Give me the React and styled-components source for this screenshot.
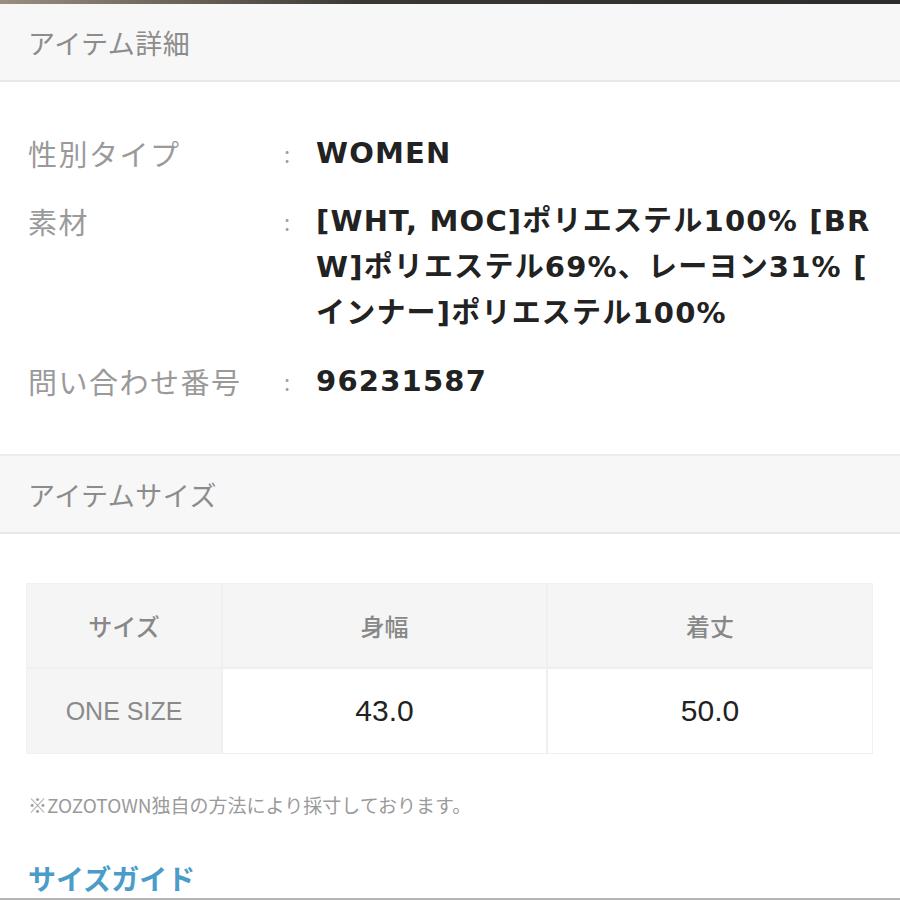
import React from "react";
import styled, { createGlobalStyle } from "styled-components";

const GlobalStyle = createGlobalStyle`
	html, body {
		margin: 0;
		padding: 0;
		background: #ffffff;
	}
	body {
		font-family: "Noto Sans CJK JP", "Noto Sans", sans-serif;
	}
`;

//data
const details = [
	{ label: "性別タイプ", lines: ["WOMEN"] },
	{
		label: "素材",
		lines: [
			"[WHT, MOC]ポリエステル100% [BR",
			"W]ポリエステル69%、レーヨン31% [",
			"インナー]ポリエステル100%",
		],
	},
	{ label: "問い合わせ番号", lines: ["96231587"] },
];

const sizeHead = ["サイズ", "身幅", "着丈"];
const sizeRows = [{ name: "ONE SIZE", values: ["43.0", "50.0"] }];

function App() {
	return (
		<>
			<GlobalStyle />
			<Page>
				<PhotoEdge />
				<SectionHeader>アイテム詳細</SectionHeader>
				<DetailList>
					{details.map((item) => (
						<DetailRow key={item.label}>
							<Label>{item.label}</Label>
							<Colon>:</Colon>
							<Value>
								{item.lines.map((line) => (
									<span key={line}>{line}</span>
								))}
							</Value>
						</DetailRow>
					))}
				</DetailList>
				<SectionHeader $top>アイテムサイズ</SectionHeader>
				<SizeArea>
					<SizeTable>
						{sizeHead.map((head) => (
							<HeadCell key={head}>{head}</HeadCell>
						))}
						{sizeRows.map((row) => (
							<React.Fragment key={row.name}>
								<NameCell>{row.name}</NameCell>
								{row.values.map((v, i) => (
									<ValueCell key={i}>{v}</ValueCell>
								))}
							</React.Fragment>
						))}
					</SizeTable>
					<Note>※ZOZOTOWN独自の方法により採寸しております。</Note>
					<GuideLink href="#">サイズガイド</GuideLink>
				</SizeArea>
			</Page>
		</>
	);
}

const Page = styled.div`
	width: 900px;
	height: 900px;
	overflow: hidden;
	background: #fff;
	border-bottom: 2px solid #b5b5b5;
	box-sizing: border-box;
`;

const PhotoEdge = styled.div`
	height: 4px;
	background: linear-gradient(90deg, #9a8f80 0%, #3a3733 40%, #2e2c2a 100%);
`;

const SectionHeader = styled.div`
	height: 76px;
	display: flex;
	align-items: center;
	padding: 0 28px;
	background: #f7f7f7;
	border-bottom: 2px solid #e8e8e8;
	border-top: ${(p) => (p.$top ? "2px solid #ececec" : "none")};
	color: #8c8c8c;
	font-size: 27px;
	letter-spacing: 0.5px;
`;

const DetailList = styled.div`
	display: flex;
	flex-direction: column;
	gap: 22px;
	padding: 48px 0 50px 28px;
`;

const DetailRow = styled.div`
	display: grid;
	grid-template-columns: 256px 32px 1fr;
	line-height: 46px;
`;

const Label = styled.div`
	color: #9a9a9a;
	font-size: 29px;
	letter-spacing: 1.5px;
	white-space: nowrap;
`;

const Colon = styled.div`
	color: #a0a0a0;
	font-size: 22px;
`;

const Value = styled.div`
	display: flex;
	flex-direction: column;
	color: #222;
	font-family: "DejaVu Sans", "Noto Sans CJK JP", sans-serif;
	font-weight: 700;
	font-size: 29px;
	letter-spacing: 1.2px;
	white-space: nowrap;
`;

const SizeArea = styled.div`
	padding: 49px 27px 0 26px;
`;

const SizeTable = styled.div`
	display: grid;
	grid-template-columns: 194px 323px 1fr;
	grid-template-rows: 83px 84px;
	gap: 2px;
	background: #efefef;
	border: 1px solid #f1f1f1;
`;

const HeadCell = styled.div`
	display: flex;
	align-items: center;
	justify-content: center;
	background: #f5f5f5;
	color: #888;
	font-size: 24px;
	font-weight: 500;
`;

const NameCell = styled(HeadCell)`
	font-family: "Liberation Sans", "Noto Sans CJK JP", sans-serif;
	font-weight: 400;
	font-size: 25px;
	color: #8a8a8a;
`;

const ValueCell = styled.div`
	display: flex;
	align-items: center;
	justify-content: center;
	background: #fff;
	color: #222;
	font-family: "Liberation Sans", sans-serif;
	font-size: 30px;
`;

const Note = styled.p`
	margin: 36px 0 0 2px;
	color: #9a9a9a;
	font-size: 19px;
	line-height: 30px;
`;

const GuideLink = styled.a`
	display: block;
	margin: 40px 0 0 2px;
	color: #4a9cc9;
	font-size: 28px;
	font-weight: 700;
	line-height: 36px;
	text-decoration: none;
`;

export default App;
